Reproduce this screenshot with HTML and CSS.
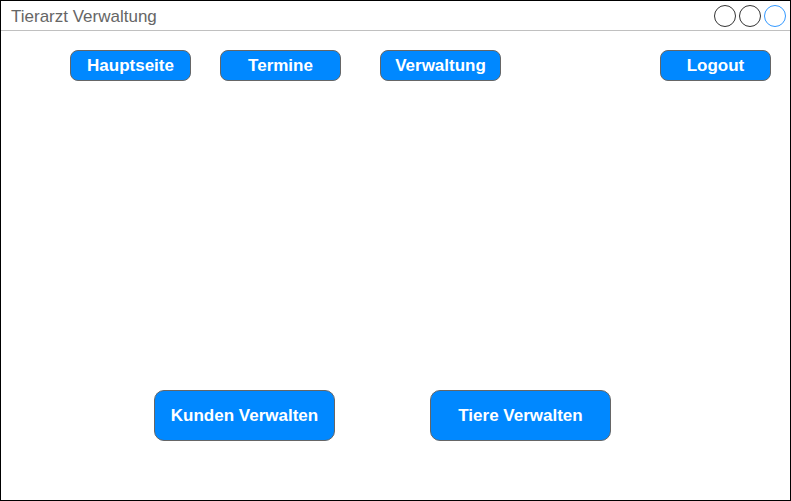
FILE: index.html
```html
<!DOCTYPE html>
<html lang="de">
<head>
<meta charset="utf-8">
<title>Tierarzt Verwaltung</title>
<link rel="stylesheet" href="styles.css">
</head>
<body>
<div class="window">
  <div class="titlebar">
    <span class="title">Tierarzt Verwaltung</span>
    <div class="controls">
      <span class="dot"></span>
      <span class="dot"></span>
      <span class="dot dot-blue"></span>
    </div>
  </div>
  <nav class="nav">
    <button class="btn nav-btn">Hauptseite</button>
    <button class="btn nav-btn gap-a">Termine</button>
    <button class="btn nav-btn gap-b">Verwaltung</button>
    <button class="btn nav-btn logout">Logout</button>
  </nav>
  <div class="actions">
    <button class="btn big-btn">Kunden Verwalten</button>
    <button class="btn big-btn">Tiere Verwalten</button>
  </div>
</div>
</body>
</html>
```
FILE: styles.css
```css
* { box-sizing: border-box; }
html, body { margin: 0; padding: 0; background: #fff; }
body { font-family: "Liberation Sans", Arial, sans-serif; }

.window {
  width: 791px;
  height: 501px;
  border: 1px solid #000;
  display: flex;
  flex-direction: column;
}

.titlebar {
  height: 30px;
  border-bottom: 1px solid #c0c0c0;
  display: flex;
  align-items: center;
  justify-content: space-between;
  padding: 0 4px 0 10px;
}
.title {
  font-size: 17px;
  color: #666;
  line-height: 1;
  margin-top: 1px;
}
.controls {
  display: flex;
  gap: 3px;
  margin-top: 1px;
}
.dot {
  width: 22px;
  height: 22px;
  border-radius: 50%;
  border: 1px solid #333;
}
.dot-blue { border-color: #3399ff; }

.btn {
  font-family: "Liberation Sans", Arial, sans-serif;
  font-weight: bold;
  color: #fff;
  background: #0088ff;
  border: 1px solid #666;
  padding: 0;
  cursor: pointer;
}

.nav {
  display: flex;
  padding: 19px 19px 0 69px;
}
.nav-btn {
  width: 121px;
  height: 31px;
  border-radius: 8px;
  font-size: 17px;
}
.gap-a { margin-left: 29px; }
.gap-b { margin-left: 39px; }
.logout { margin-left: auto; width: 111px; }

.actions {
  display: flex;
  gap: 95px;
  padding: 309px 0 0 153px;
}
.big-btn {
  width: 181px;
  height: 51px;
  border-radius: 10px;
  font-size: 17px;
}
```
